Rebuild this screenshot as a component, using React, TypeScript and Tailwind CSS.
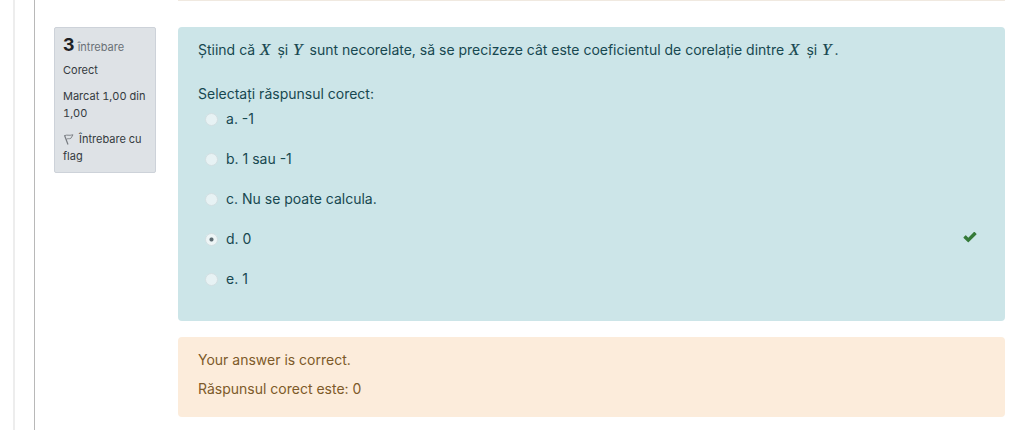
import { useState, type ReactNode } from "react";

const answers = [
  { id: "a", text: "-1" },
  { id: "b", text: "1 sau -1" },
  { id: "c", text: "Nu se poate calcula." },
  { id: "d", text: "0", correct: true },
  { id: "e", text: "1" },
];

function MathVar({ children }: { children: ReactNode }) {
  return (
    <i className="mr-[3px] ml-px font-['Liberation_Serif',serif] text-[17px] leading-none [-webkit-text-stroke:0.2px_currentColor]">
      {children}
    </i>
  );
}

function FlagIcon() {
  return (
    <svg viewBox="0 0 12 12" className="mr-1 inline-block size-3 align-[-2px]" fill="none" stroke="#777b80" aria-hidden="true">
      <path d="M1.5 2.2 5 11.5" strokeWidth="1.2" />
      <path d="M1.8 2.6C4 1.4 5.5 3 10 1.8L7.8 5.4C6 6.2 5 5 3.3 6.4" strokeWidth="0.9" />
    </svg>
  );
}

function CheckIcon() {
  return (
    <svg viewBox="-1 -2 16 16" className="size-4" role="img" aria-label="Corect">
      <path
        d="M.6 6.3 2.3 4.5Q2.7 4.1 3.1 4.5L5.3 6.7 10.9 1.1Q11.3.7 11.7 1.1L13.4 2.8Q13.8 3.2 13.4 3.6L5.8 11.1Q5.3 11.5 4.8 11.1L.6 7.1Q.2 6.7.6 6.3Z"
        fill="#357a38"
      />
    </svg>
  );
}

function QuestionInfo() {
  return (
    <aside className="w-[102px] shrink-0 space-y-[9px] rounded-xs border border-[#cdd2d9] bg-[#dee2e6] pt-2 pr-1 pb-[7px] pl-2 text-[11px] leading-[17px] text-[#343a40] tabular-nums">
      <h3 className="flex h-[17px] items-baseline gap-[3px] whitespace-nowrap text-[#6a7076]">
        <span className="text-lg leading-[17px] font-bold text-[#1d2125]">3</span> întrebare
      </h3>
      <div>Corect</div>
      <div>Marcat 1,00 din 1,00</div>
      <button type="button" className="block text-left">
        <FlagIcon />
        Întrebare cu flag
      </button>
    </aside>
  );
}

export default function App() {
  const [selected, setSelected] = useState("d");

  return (
    <div className="flex min-h-screen bg-white pl-[13px] font-['Inter',sans-serif] text-sm">
      <div className="flex grow border-l-2 border-[#ededed] pl-[19px]">
        <div className="grow border-l border-[#b8b8b8]">
          <div className="ml-[143px] mr-[19px] h-px bg-[#f0e9e0]" />
          <div className="flex items-start gap-[22px] pt-[26px] pr-[19px] pl-[19px]">
            <QuestionInfo />
            <main className="min-w-0 grow space-y-4">
              <form className="rounded-sm bg-[#cce5e8] px-5 pt-[11px] pb-8 text-[#174850]">
                <p className="leading-6">
                  Știind că <MathVar>X</MathVar> și <MathVar>Y</MathVar> sunt necorelate, să se precizeze cât este
                  coeficientul de corelație dintre <MathVar>X</MathVar> și <MathVar>Y</MathVar>.
                </p>
                <fieldset className="mt-[22px]">
                  <legend className="leading-5">Selectați răspunsul corect:</legend>
                  <div className="space-y-5 pt-[5px]">
                    {answers.map((a) => (
                      <div key={a.id} className="flex h-5 items-start justify-between px-[7px]">
                        <label className="flex h-5 items-center gap-2">
                          <input
                            type="radio"
                            name="answer"
                            value={a.id}
                            checked={selected === a.id}
                            onChange={() => setSelected(a.id)}
                            className="size-[13px] appearance-none rounded-full border border-[#d3dfe2] bg-[#e7f2f4] checked:bg-[radial-gradient(circle,#5c6a70_0_1.5px,#edf5f6_2.5px)]"
                          />
                          <span>
                            {a.id}. {a.text}
                          </span>
                        </label>
                        {a.correct && <CheckIcon />}
                      </div>
                    ))}
                  </div>
                </fieldset>
              </form>
              <section className="space-y-2 rounded-sm bg-[#fcecdb] px-5 pt-3 pb-[18px] leading-[21px] text-[#7d5a29]">
                <p>Your answer is correct.</p>
                <p>Răspunsul corect este: 0</p>
              </section>
            </main>
          </div>
        </div>
      </div>
    </div>
  );
}
